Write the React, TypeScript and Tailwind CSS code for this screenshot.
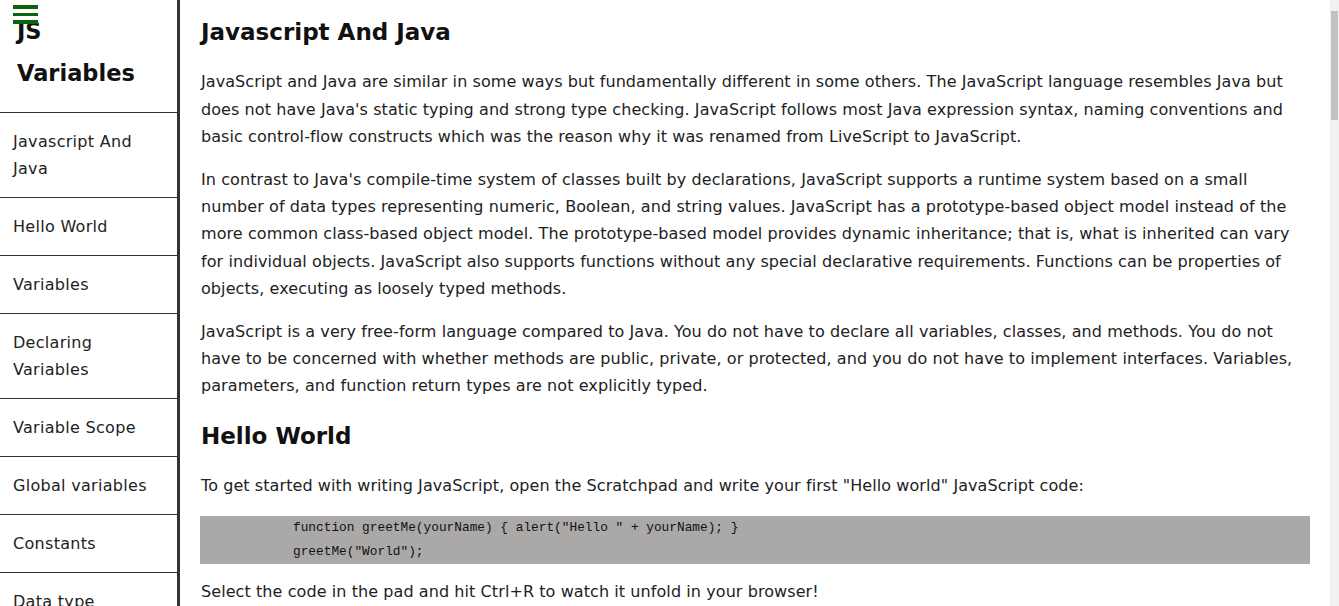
import React from "react";

const nav: string[][] = [
  ["Javascript And", "Java"],
  ["Hello World"],
  ["Variables"],
  ["Declaring", "Variables"],
  ["Variable Scope"],
  ["Global variables"],
  ["Constants"],
  ["Data type"],
];

const p1 = [
  "JavaScript and Java are similar in some ways but fundamentally different in some others. The JavaScript language resembles Java but",
  "does not have Java's static typing and strong type checking. JavaScript follows most Java expression syntax, naming conventions and",
  "basic control-flow constructs which was the reason why it was renamed from LiveScript to JavaScript.",
];
const p2 = [
  "In contrast to Java's compile-time system of classes built by declarations, JavaScript supports a runtime system based on a small",
  "number of data types representing numeric, Boolean, and string values. JavaScript has a prototype-based object model instead of the",
  "more common class-based object model. The prototype-based model provides dynamic inheritance; that is, what is inherited can vary",
  "for individual objects. JavaScript also supports functions without any special declarative requirements. Functions can be properties of",
  "objects, executing as loosely typed methods.",
];
const p3 = [
  "JavaScript is a very free-form language compared to Java. You do not have to declare all variables, classes, and methods. You do not",
  "have to be concerned with whether methods are public, private, or protected, and you do not have to implement interfaces. Variables,",
  "parameters, and function return types are not explicitly typed.",
];

function Para({ lines }: { lines: string[] }) {
  return (
    <p className="mb-[16px] text-[16px] leading-[27.2px] tracking-[0.08px] text-[#222]">
      {lines.map((l, i) => (
        <span key={i} className="block whitespace-nowrap">
          {l}
        </span>
      ))}
    </p>
  );
}

export default function App() {
  return (
    <div
      className="flex h-[606px] w-[1339px] overflow-hidden bg-white text-black"
      style={{ fontFamily: '"DejaVu Sans", "Noto Sans", sans-serif' }}
    >
      <aside className="flex w-[180px] shrink-0 flex-col border-r-[3px] border-[#333]">
        <div className="relative h-[113px] shrink-0 border-b border-[#333] px-[17px] pt-[10px]">
          <div className="absolute left-[13px] top-[5px] flex w-[25px] flex-col gap-[4px]">
            <span className="block h-[3.5px] bg-[#0b640b]" />
            <span className="block h-[3.5px] bg-[#0b640b]" />
            <span className="block h-[3.5px] bg-[#0b640b]" />
          </div>
          <div className="text-[22.5px] font-bold leading-[42px] text-[#111]">
            JS
            <br />
            Variables
          </div>
        </div>
        {nav.map((item, i) => (
          <div
            key={i}
            className="shrink-0 border-b border-[#333] px-[13px] py-[15px] text-[16px] leading-[27px] tracking-[0.3px] text-[#222]"
          >
            {item.map((l, j) => (
              <span key={j} className="block whitespace-nowrap">
                {l}
              </span>
            ))}
          </div>
        ))}
      </aside>
      <main className="flex-1 overflow-hidden pl-[21px] pr-[20px] pt-[16px]">
        <h2 className="mb-[20.4px] text-[23px] font-bold leading-[32px] text-[#111]">
          Javascript And Java
        </h2>
        <Para lines={p1} />
        <Para lines={p2} />
        <Para lines={p3} />
        <h2 className="mb-[20.4px] mt-[20.4px] text-[23px] font-bold leading-[32px] text-[#111]">
          Hello World
        </h2>
        <Para
          lines={[
            'To get started with writing JavaScript, open the Scratchpad and write your first "Hello world" JavaScript code:',
          ]}
        />
        <pre
          className="mb-[14px] ml-[-1px] bg-[#aba8a8] pl-[93px] text-[12.8px] leading-[24px] text-[#111]"
          style={{ fontFamily: '"Liberation Mono", "DejaVu Sans Mono", monospace' }}
        >
          {'function greetMe(yourName) { alert("Hello " + yourName); }\ngreetMe("World");'}
        </pre>
        <Para lines={["Select the code in the pad and hit Ctrl+R to watch it unfold in your browser!"]} />
      </main>
      <div className="flex w-[9px] shrink-0 flex-col bg-[#f1f1f1]">
        <div className="h-[11px]" />
        <div className="mx-[1px] h-[109px] bg-[#c1c1c1]" />
      </div>
    </div>
  );
}
